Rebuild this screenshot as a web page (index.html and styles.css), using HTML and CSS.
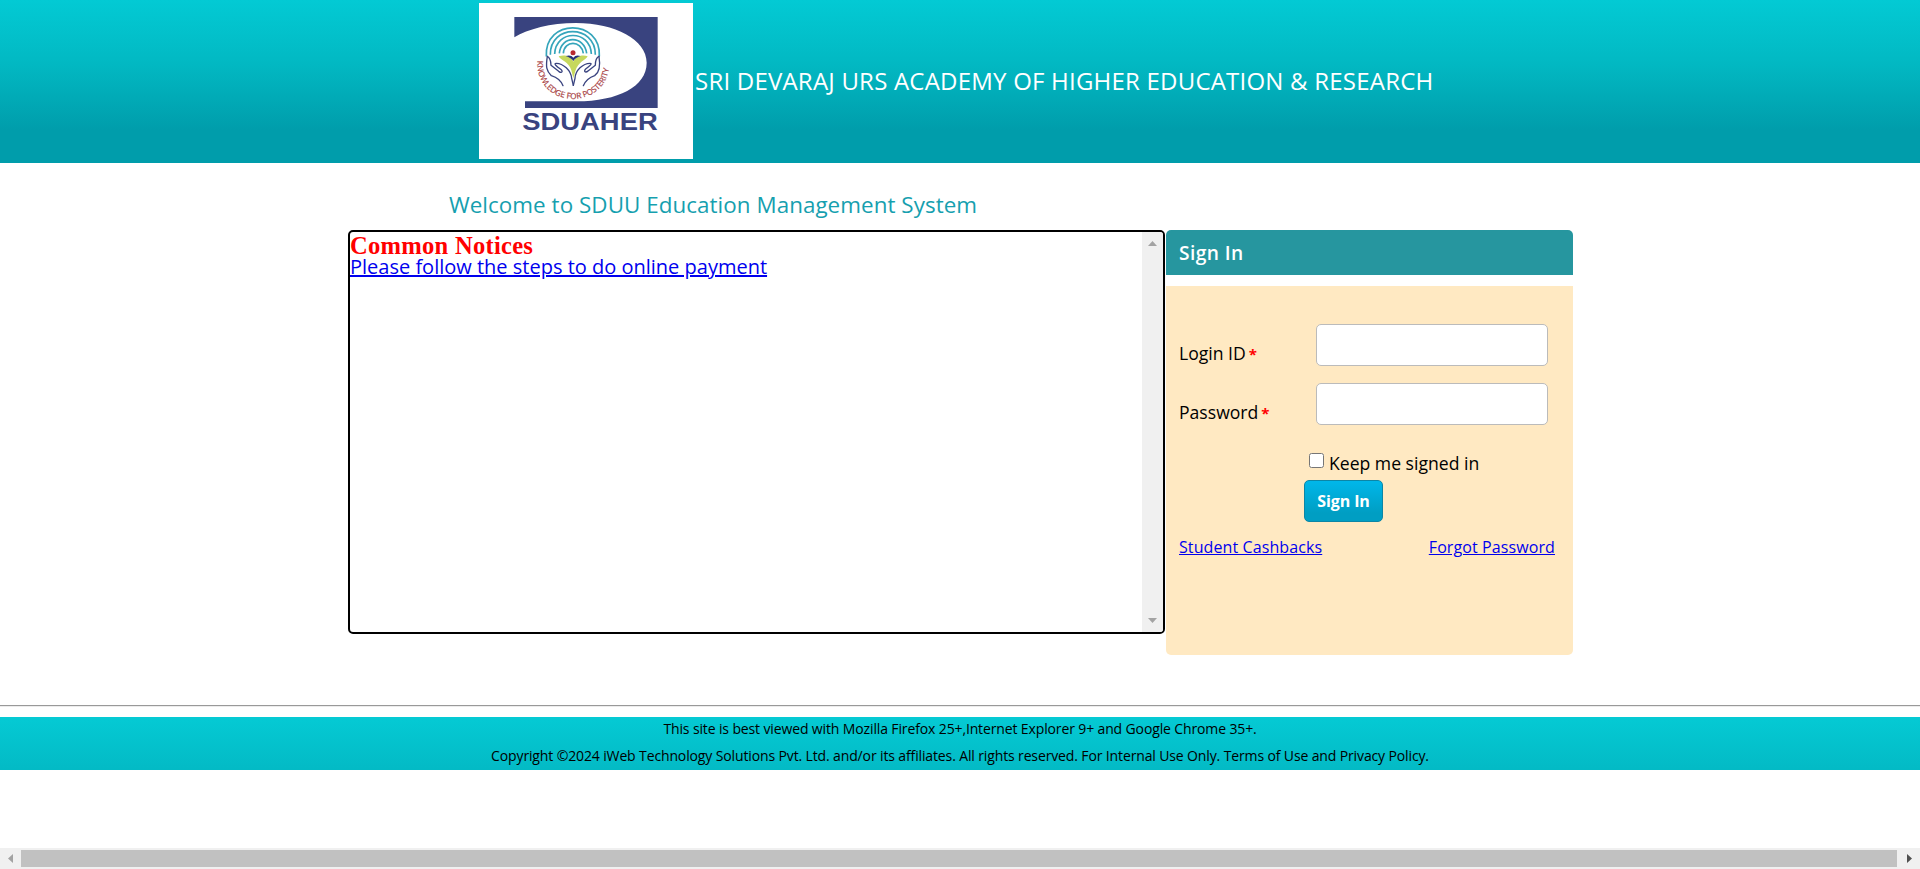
FILE: index.html
```html
<!DOCTYPE html>
<html lang="en">
<head>
<meta charset="utf-8">
<title>SDUU Education Management System</title>
<link rel="stylesheet" href="styles.css">
</head>
<body>
<header class="banner">
  <svg class="logo" viewBox="27 9 642 468" role="img" aria-label="SDUAHER">
    <rect x="27" y="9" width="642" height="468" fill="#fff"/>
    <path d="M133 51H563V324H165V304H320C445 303 530 260 530 188C530 119 435 69 318 69C241 69 174 87 133 112Z" fill="#39437f"/>
    <g fill="none" stroke="#35a5bb" stroke-width="5">
      <path d="M229 169C223 55 393 55 388 169"/>
      <path d="M241 164C240 72 376 72 376 164"/>
      <path d="M254 162C257 88 361 88 364 162"/>
      <path d="M268 160C273 105 343 105 350 160"/>
      <path d="M280 160C283 120 334 120 340 160"/>
    </g>
    <path d="M266 169C286 163 304 170 310 185C316 170 335 163 353 169C346 181 325 185 316 213L310 235L304 211C296 185 272 181 266 169Z" fill="#c6d85d"/>
    <path d="M287 168Q303 163 310 173Q317 163 332 168Q315 174 310 183Q304 174 287 168Z" fill="#283478"/>
    <circle cx="309" cy="158" r="7.500" fill="#b8292f"/>
    <g fill="none" stroke="#39437f" stroke-width="4" stroke-linecap="round" stroke-linejoin="round">
      <path d="M232 169C227 200 229 213 244 227Q270 235 279 257"/>
      <path d="M232 169Q242 173 243 196L266 214C276 221 280 214 272 208C260 199 249 190 259 190C279 190 303 211 305 235L310 256"/>
      <path d="M387 169C392 200 389 217 374 227Q350 235 340 257"/>
      <path d="M387 169Q376 173 376 196L355 212C346 220 340 214 347 207C358 199 369 190 360 190C339 190 316 211 315 235L310 256"/>
    </g>
    <path id="motto" d="M202 182C196 335 423 335 418 182" fill="none"/>
    <text class="motto"><textPath href="#motto" textLength="332" lengthAdjust="spacingAndGlyphs">KNOWLEDGE FOR POSTERITY</textPath></text>
    <text class="acronym" x="157" y="391" textLength="406" lengthAdjust="spacingAndGlyphs">SDUAHER</text>
  </svg>
  <h1 class="academy">SRI DEVARAJ URS ACADEMY OF HIGHER EDUCATION &amp; RESEARCH</h1>
</header>
<main class="main">
  <h2 class="welcome">Welcome to SDUU Education Management System</h2>
  <div class="columns">
    <section class="notices">
      <div class="notice-list">
        <h3 class="notice-title">Common Notices</h3>
        <a class="notice-link" href="#">Please follow the steps to do online payment</a>
      </div>
      <div class="vbar">
        <svg width="9" height="5" viewBox="0 0 9 5"><path d="M0 5L4.500 0L9 5Z" fill="#a3a3a3"/></svg>
        <svg width="9" height="5" viewBox="0 0 9 5"><path d="M0 0H9L4.500 5Z" fill="#a3a3a3"/></svg>
      </div>
    </section>
    <section class="signin">
      <h3 class="signin-title">Sign In</h3>
      <form class="signin-body">
        <div class="field"><label for="login">Login ID<b class="req">*</b></label><input class="text" id="login" type="text"></div>
        <div class="field"><label for="password">Password<b class="req">*</b></label><input class="text" id="password" type="password"></div>
        <div class="keep"><input class="check" id="keep" type="checkbox"><label for="keep">Keep me signed in</label></div>
        <button class="submit" type="button">Sign In</button>
        <div class="links"><a href="#">Student Cashbacks</a><a href="#">Forgot Password</a></div>
      </form>
    </section>
  </div>
</main>
<div class="rule"></div>
<footer class="footer">
  <p>This site is best viewed with Mozilla Firefox 25+,Internet Explorer 9+ and Google Chrome 35+.</p>
  <p>Copyright ©2024 iWeb Technology Solutions Pvt. Ltd. and/or its affiliates. All rights reserved. For Internal Use Only. Terms of Use and Privacy Policy.</p>
</footer>
<div class="hbar">
  <svg width="5" height="9" viewBox="0 0 5 9"><path d="M5 0V9L0 4.500Z" fill="#a3a3a3"/></svg>
  <div class="thumb"></div>
  <svg width="5" height="9" viewBox="0 0 5 9"><path d="M0 0V9L5 4.500Z" fill="#505050"/></svg>
</div>
</body>
</html>
```
FILE: styles.css
```css
* { box-sizing: border-box; }
body {
  margin: 0;
  height: 869px;
  display: flex;
  flex-direction: column;
  overflow: hidden;
  background: #fff;
  color: #000;
  font-family: "Open Sans", "Noto Sans", sans-serif;
}
h1, h2, h3, p { margin: 0; font-weight: 400; }
a { color: #00e; text-decoration: underline; }
.banner {
  height: 163px;
  flex: none;
  display: flex;
  padding: 3px 0 0 479px;
  background: linear-gradient(#03cad4 0, #02b9c3 38%, #009dab 80%, #009dab 100%);
}
.logo { width: 214px; height: 156px; flex: none; display: block; }
.motto { font: 24px "Open Sans", sans-serif; fill: #a63a3c; stroke: #a63a3c; stroke-width: .5px; }
.acronym { font: bold 72px "Liberation Sans", sans-serif; fill: #39437f; }
.academy { margin: 61px 0 0 2px; font-size: 24px; line-height: 33px; letter-spacing: .215px; color: #fff; white-space: nowrap; }
.main { height: 542px; flex: none; padding: 25px 0 0 348px; }
.welcome { padding-left: 101px; height: 42px; font-size: 22.4px; line-height: 34px; letter-spacing: .05px; color: #169faf; white-space: nowrap; }
.columns { display: flex; align-items: flex-start; }
.notices {
  width: 817px;
  height: 404px;
  display: flex;
  border: 2px solid #000;
  border-radius: 5px;
  overflow: hidden;
}
.notice-list { flex: 1; }
.notice-title { padding-top: 1px; font: bold 24.6px/25px "Liberation Serif", serif; height: 23px; letter-spacing: .25px; color: #f00; }
.notice-link { display: block; font-size: 20px; line-height: 23px; white-space: nowrap; }
.vbar {
  width: 21px;
  display: flex;
  flex-direction: column;
  justify-content: space-between;
  align-items: center;
  padding: 9px 0;
  background: #f0f0f0;
}
.signin { width: 407px; margin-left: 1px; }
.signin-title {
  height: 45px;
  padding-left: 13px;
  border-radius: 5px 5px 0 0;
  background: #26969f;
  color: #fff;
  font-size: 19.2px;
  font-weight: 600;
  line-height: 46px;
  letter-spacing: .4px;
}
.signin-body {
  height: 369px;
  margin-top: 11px;
  padding: 38px 18px 0 13px;
  border-radius: 0 0 5px 5px;
  background: #ffe9c2;
}
.field { display: flex; height: 59px; font-size: 17.6px; }
.field label { width: 137px; padding-top: 17px; line-height: 24px; }
.req { margin-left: 3px; color: #f00; font-size: 15px; }
.text { width: 232px; height: 42px; margin: 0; border: 1px solid #bbb; border-radius: 5px; background: #fff; }
.keep { display: flex; align-items: flex-start; height: 38px; padding: 9px 0 0 130px; font-size: 17.6px; line-height: 24px; }
.check { width: 15px; height: 15px; margin: 2px 5px 0 0; }
.submit {
  display: block;
  width: 79px;
  height: 42px;
  margin-left: 125px;
  padding: 0;
  border: 1px solid #0c86a6;
  border-radius: 5px;
  background: linear-gradient(#00b7ea, #009ec3 80%);
  color: #fff;
  font: bold 16px "Open Sans", sans-serif;
  letter-spacing: -.1px;
}
.links { display: flex; justify-content: space-between; margin-top: 14px; font-size: 16px; line-height: 22px; letter-spacing: .1px; }
.rule { height: 2px; flex: none; border-top: 1px solid #999; border-bottom: 1px solid #ececec; }
.footer {
  height: 53px;
  flex: none;
  margin-top: 10px;
  background: linear-gradient(#05cad4, #03bac5);
  text-align: center;
  font-size: 14px;
  letter-spacing: -.13px;
}
.footer p { height: 27px; line-height: 24px; }
.hbar {
  height: 21px;
  flex: none;
  margin-top: auto;
  display: flex;
  align-items: center;
  padding: 0 8px;
  background: #f0f0f0;
}
.thumb { flex: 1; height: 17px; margin: 0 10px 0 8px; background: #c1c1c1; }
```
